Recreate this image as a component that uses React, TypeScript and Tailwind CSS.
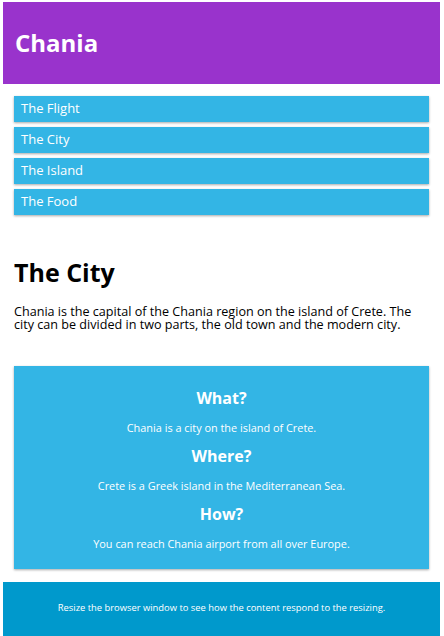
import React from "react";

const menu = ["The Flight", "The City", "The Island", "The Food"];

const facts = [
  { q: "What?", a: "Chania is a city on the island of Crete." },
  { q: "Where?", a: "Crete is a Greek island in the Mediterranean Sea." },
  { q: "How?", a: "You can reach Chania airport from all over Europe." },
];

export default function App() {
  return (
    <div className="min-h-[636px] bg-white pl-[3px] pr-[4px] pt-[2px] font-['Open_Sans',sans-serif]">
      <header className="flex h-[82px] items-center bg-[#9933cc] px-[12px]">
        <h1 className="text-[24px] font-bold text-white">Chania</h1>
      </header>

      <div className="px-[11px]">
        <ul className="mt-[12px] flex flex-col gap-[5px]">
          {menu.map((item) => (
            <li
              key={item}
              className="flex h-[26px] items-center bg-[#33b5e5] px-[7px] text-[13px] text-white shadow-[0_1px_3px_rgba(0,0,0,0.12),0_1px_2px_rgba(0,0,0,0.24)]"
            >
              {item}
            </li>
          ))}
        </ul>

        <main className="mt-[42px]">
          <h2 className="text-[25px] font-bold leading-[30px] text-black">The City</h2>
          <p className="mt-[18px] text-[12.6px] leading-[13px] text-black">
            Chania is the capital of the Chania region on the island of Crete. The city can be divided in two parts, the old town and the modern city.
          </p>
        </main>

        <aside className="mt-[35px] flex h-[203px] flex-col items-center bg-[#33b5e5] pt-[18px] text-center text-white shadow-[0_1px_3px_rgba(0,0,0,0.12),0_1px_2px_rgba(0,0,0,0.24)]">
          {facts.map((f) => (
            <div key={f.q} className="flex flex-col items-center">
              <h3 className="text-[16px] font-bold leading-[29px]">{f.q}</h3>
              <p className="text-[10.9px] leading-[29px]">{f.a}</p>
            </div>
          ))}
        </aside>
      </div>

      <footer className="mt-[13px] flex h-[54px] items-start justify-center bg-[#0099cc] pt-[19px] text-[9.4px] text-white">
        Resize the browser window to see how the content respond to the resizing.
      </footer>
    </div>
  );
}
